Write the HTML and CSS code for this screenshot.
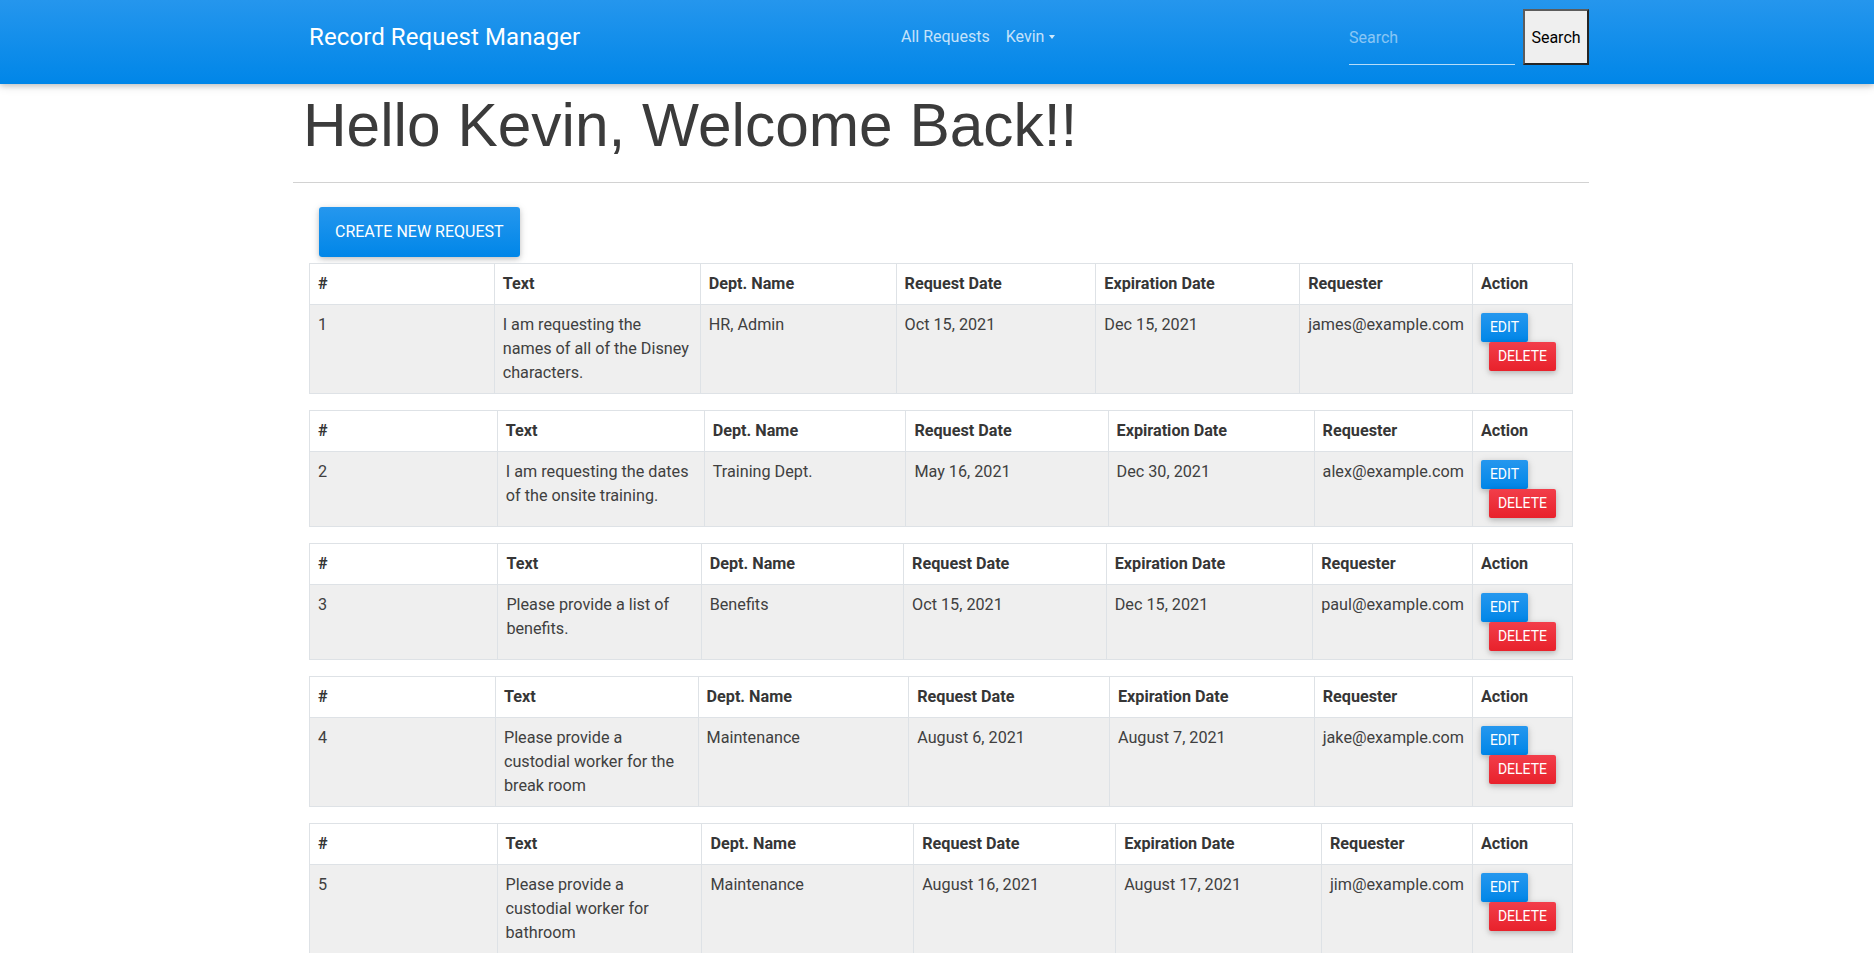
FILE: index.html
```html
<!DOCTYPE html>
<html lang="en">
<head>
<meta charset="utf-8">
<title>Record Request Manager</title>
<link rel="stylesheet" href="styles.css">
</head>
<body>
<nav class="navbar">
  <div class="wrap nav-inner">
    <a class="brand" href="#">Record Request Manager</a>
    <ul class="nav-links">
      <li><a href="#">All Requests</a></li>
      <li><a href="#">Kevin<span class="caret"></span></a></li>
    </ul>
    <form class="search">
      <input type="text" placeholder="Search">
      <button type="button">Search</button>
    </form>
  </div>
</nav>
<main class="wrap">
  <h1 class="welcome">Hello Kevin, Welcome Back!!</h1>
  <hr class="rule">
  <div class="content">
    <button class="btn-create" type="button">Create New Request</button>

    <table class="req">
      <thead><tr><th class="c1">#</th><th class="c2">Text</th><th class="c3">Dept. Name</th><th class="c4">Request Date</th><th class="c5">Expiration Date</th><th class="c6">Requester</th><th class="c7">Action</th></tr></thead>
      <tbody><tr><td>1</td><td>I am requesting the names of all of the Disney characters.</td><td>HR, Admin</td><td>Oct 15, 2021</td><td>Dec 15, 2021</td><td class="c6">james@example.com</td><td class="c7"><a class="btn-edit" href="#">Edit</a><button class="btn-del" type="button">Delete</button></td></tr></tbody>
    </table>

    <table class="req">
      <thead><tr><th class="c1">#</th><th class="c2">Text</th><th class="c3">Dept. Name</th><th class="c4">Request Date</th><th class="c5">Expiration Date</th><th class="c6">Requester</th><th class="c7">Action</th></tr></thead>
      <tbody><tr><td>2</td><td>I am requesting the dates of the onsite training.</td><td>Training Dept.</td><td>May 16, 2021</td><td>Dec 30, 2021</td><td class="c6">alex@example.com</td><td class="c7"><a class="btn-edit" href="#">Edit</a><button class="btn-del" type="button">Delete</button></td></tr></tbody>
    </table>

    <table class="req">
      <thead><tr><th class="c1">#</th><th class="c2">Text</th><th class="c3">Dept. Name</th><th class="c4">Request Date</th><th class="c5">Expiration Date</th><th class="c6">Requester</th><th class="c7">Action</th></tr></thead>
      <tbody><tr><td>3</td><td>Please provide a list of benefits.</td><td>Benefits</td><td>Oct 15, 2021</td><td>Dec 15, 2021</td><td class="c6">paul@example.com</td><td class="c7"><a class="btn-edit" href="#">Edit</a><button class="btn-del" type="button">Delete</button></td></tr></tbody>
    </table>

    <table class="req">
      <thead><tr><th class="c1">#</th><th class="c2">Text</th><th class="c3">Dept. Name</th><th class="c4">Request Date</th><th class="c5">Expiration Date</th><th class="c6">Requester</th><th class="c7">Action</th></tr></thead>
      <tbody><tr><td>4</td><td>Please provide a custodial worker for the break room</td><td>Maintenance</td><td>August 6, 2021</td><td>August 7, 2021</td><td class="c6">jake@example.com</td><td class="c7"><a class="btn-edit" href="#">Edit</a><button class="btn-del" type="button">Delete</button></td></tr></tbody>
    </table>

    <table class="req">
      <thead><tr><th class="c1">#</th><th class="c2">Text</th><th class="c3">Dept. Name</th><th class="c4">Request Date</th><th class="c5">Expiration Date</th><th class="c6">Requester</th><th class="c7">Action</th></tr></thead>
      <tbody><tr><td>5</td><td>Please provide a custodial worker for bathroom</td><td>Maintenance</td><td>August 16, 2021</td><td>August 17, 2021</td><td class="c6">jim@example.com</td><td class="c7"><a class="btn-edit" href="#">Edit</a><button class="btn-del" type="button">Delete</button></td></tr></tbody>
    </table>
  </div>
</main>
</body>
</html>
```

FILE: styles.css
```css
html, body {
  margin: 0;
  padding: 0;
  background: #ffffff;
}

body {
  font-family: Roboto, "Noto Sans", "Liberation Sans", sans-serif;
  font-size: 16px;
  line-height: 24px;
  color: #3d3d3d;
}

.wrap {
  width: 1296px;
  margin-left: calc(50% - 644px);
  box-sizing: border-box;
}

/* ---------- navbar ---------- */
.navbar {
  height: 84px;
  background: linear-gradient(180deg, #2596ed 0%, #0086e8 100%);
  box-shadow: 0 2px 5px rgba(0, 0, 0, 0.16), 0 2px 10px rgba(0, 0, 0, 0.12);
}

.nav-inner {
  height: 74px;
  display: flex;
  align-items: center;
  padding-left: 16px;
}

.brand {
  font-size: 24px;
  line-height: 30px;
  letter-spacing: 0.1px;
  color: #ffffff;
  text-decoration: none;
  margin-right: 27px;
}

.nav-links {
  display: flex;
  list-style: none;
  margin: 0 auto;
  padding: 0;
}

.nav-links a {
  display: block;
  padding: 8px;
  font-size: 16px;
  line-height: 24px;
  color: rgba(255, 255, 255, 0.76);
  text-decoration: none;
}

.caret {
  display: inline-block;
  margin-left: 5px;
  vertical-align: 3px;
  border-top: 4px solid rgba(255, 255, 255, 0.8);
  border-left: 3px solid transparent;
  border-right: 3px solid transparent;
}

.search {
  display: flex;
  align-items: center;
  margin: 0;
}

.search input {
  box-sizing: border-box;
  width: 166px;
  height: 40px;
  margin-top: 16px;
  padding: 0 0 15px;
  border: 0;
  border-bottom: 1px solid rgba(255, 255, 255, 0.7);
  background: transparent;
  font-family: Roboto, sans-serif;
  font-size: 16px;
  line-height: 24px;
  color: #ffffff;
  outline: none;
}

.search input::placeholder {
  color: rgba(255, 255, 255, 0.5);
}

.search button {
  box-sizing: border-box;
  margin-left: 8px;
  width: 66px;
  height: 56px;
  padding: 0;
  background: #efefef;
  border-style: solid;
  border-width: 2px;
  border-color: #5c5c5c #262626 #262626 #5c5c5c;
  font-family: Roboto, sans-serif;
  font-size: 16px;
  color: #000000;
}

/* ---------- heading ---------- */
.welcome {
  margin: 5px 0 0;
  padding-left: 10px;
  font-family: "Liberation Sans", Arial, sans-serif;
  font-weight: 400;
  font-size: 60.4px;
  line-height: 72px;
  color: #3b3b3b;
}

.rule {
  margin: 21px 0 24px;
  height: 0;
  border: 0;
  border-top: 1px solid #d2d2d2;
}

.content {
  padding: 0 16px;
}

.btn-create {
  display: block;
  height: 50px;
  margin: 0 0 6px 10px;
  padding: 0 16px;
  border: 0;
  border-radius: 3px;
  background: linear-gradient(180deg, #2597ee 0%, #0086e8 100%);
  box-shadow: 0 2px 5px rgba(0, 0, 0, 0.16), 0 2px 10px rgba(0, 0, 0, 0.12);
  color: #ffffff;
  font-family: Roboto, sans-serif;
  font-size: 16px;
  line-height: 24px;
  text-transform: uppercase;
}

/* ---------- tables ---------- */
.req {
  width: 100%;
  border-collapse: collapse;
  margin-bottom: 16px;
  font-size: 16.2px;
  line-height: 24px;
}

.req th,
.req td {
  border: 1px solid #dee2e6;
  padding: 8px;
  text-align: left;
  vertical-align: top;
}

.req th {
  background: #ffffff;
  font-weight: 700;
  color: #363636;
}

.req td {
  background: #efefef;
  color: #404040;
}

.c1,
.c2,
.c3,
.c4,
.c5 {
  width: 20%;
}

.c6 {
  white-space: nowrap;
}

.btn-edit,
.btn-del {
  display: block;
  width: max-content;
  padding: 4px 9px;
  border: 0;
  border-radius: 2px;
  font-family: Roboto, sans-serif;
  font-size: 14px;
  line-height: 21px;
  color: #ffffff;
  text-transform: uppercase;
  text-decoration: none;
  box-shadow: 0 2px 5px rgba(0, 0, 0, 0.16), 0 2px 10px rgba(0, 0, 0, 0.12);
}

.btn-edit {
  background: linear-gradient(180deg, #2597ee 0%, #0086e8 100%);
}

.btn-del {
  margin: 0 8px;
  background: linear-gradient(180deg, #f23e4a 0%, #e8212b 100%);
}
```
